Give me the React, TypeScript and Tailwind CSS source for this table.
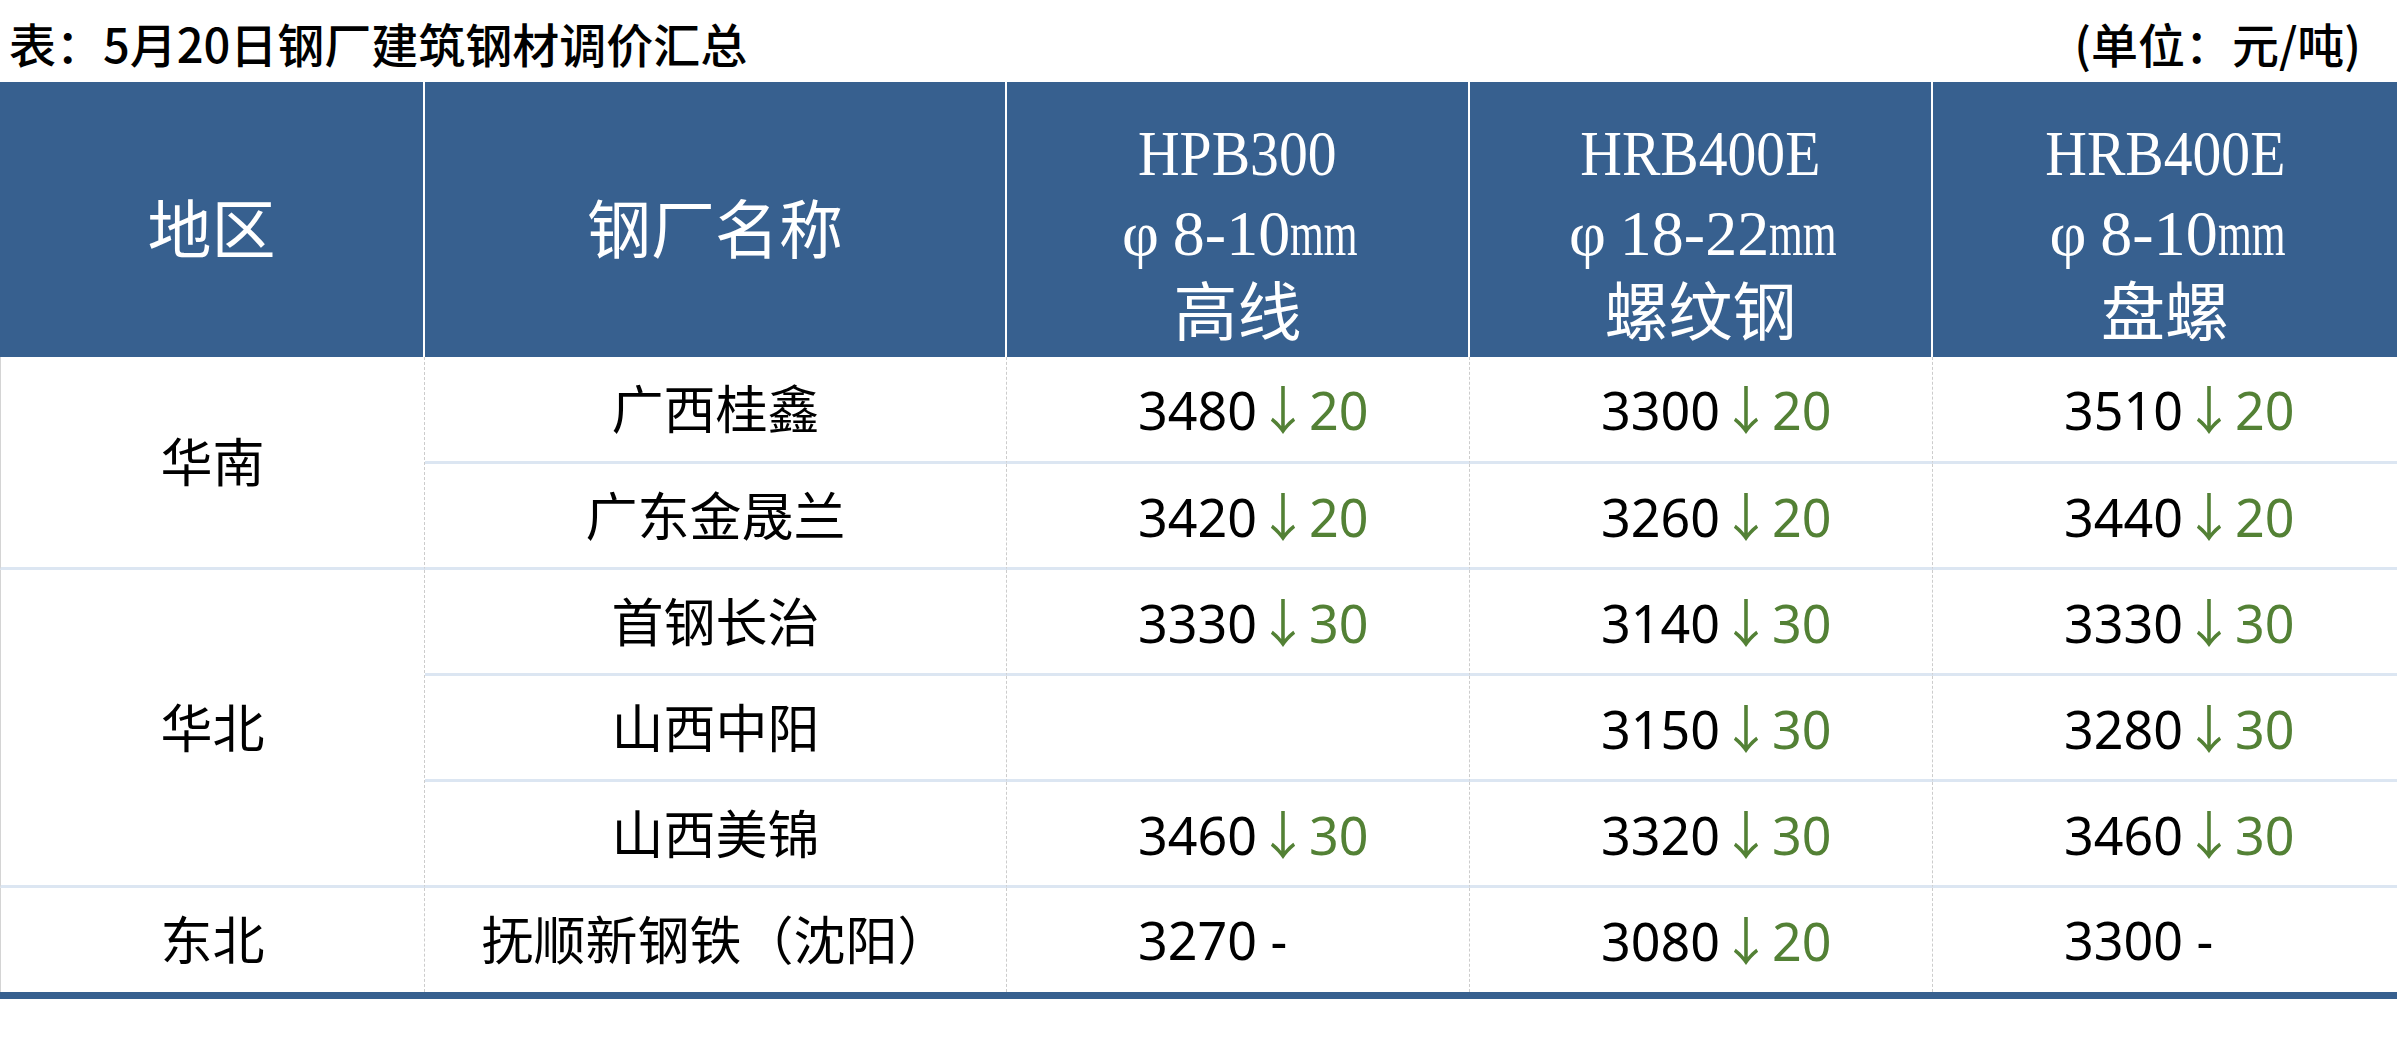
import React from "react";

type Val = { p: string; d?: string } | null;
type Item = { name: string; v: [Val, Val, Val] };
type Group = { region: string; items: Item[] };

const groups: Group[] = [
  {
    region: "华南",
    items: [
      { name: "广西桂鑫", v: [{ p: "3480", d: "20" }, { p: "3300", d: "20" }, { p: "3510", d: "20" }] },
      { name: "广东金晟兰", v: [{ p: "3420", d: "20" }, { p: "3260", d: "20" }, { p: "3440", d: "20" }] },
    ],
  },
  {
    region: "华北",
    items: [
      { name: "首钢长治", v: [{ p: "3330", d: "30" }, { p: "3140", d: "30" }, { p: "3330", d: "30" }] },
      { name: "山西中阳", v: [null, { p: "3150", d: "30" }, { p: "3280", d: "30" }] },
      { name: "山西美锦", v: [{ p: "3460", d: "30" }, { p: "3320", d: "30" }, { p: "3460", d: "30" }] },
    ],
  },
  {
    region: "东北",
    items: [{ name: "抚顺新钢铁（沈阳）", v: [{ p: "3270" }, { p: "3080", d: "20" }, { p: "3300" }] }],
  },
];

const spanCls: Record<number, string> = { 1: "row-span-1", 2: "row-span-2", 3: "row-span-3" };

function Mm() {
  return <span className="inline-block w-[63px] origin-left scale-x-[0.68] whitespace-nowrap">mm</span>;
}

function ColHead({ a, b, c }: { a: string; b: string; c: string }) {
  return (
    <div className="flex h-full flex-col items-center justify-center pt-[27px] text-white">
      <div className="scale-x-[0.9] leading-[88px] font-['Liberation_Serif','Noto_Sans_CJK_SC',serif] text-[64px]">{a}</div>
      <div className="leading-[72px] font-['Liberation_Serif','Noto_Sans_CJK_SC',serif] text-[64px] whitespace-nowrap">
        <span className="mr-[14px]">φ</span>
        {b}
        <Mm />
      </div>
      <div className="leading-[87px] font-['Liberation_Serif','Noto_Sans_CJK_SC',serif] text-[64px]">{c}</div>
    </div>
  );
}

export default function App() {
  const totalRows = groups.reduce((s, g) => s + g.items.length, 0);
  let idx = 0;
  const cells: React.ReactNode[] = [];
  groups.forEach((g, gi) => {
    const lastGroup = gi === groups.length - 1;
    cells.push(
      <div
        key={"r" + gi}
        className={
          spanCls[g.items.length] +
          " flex items-center justify-center border-l border-l-[#d4d4d4] border-r border-r-[#cccccc] [border-right-style:dashed] " +
          (lastGroup ? "" : "border-b-[3px] border-b-[#dce6f2]")
        }
      >
        {g.region}
      </div>
    );
    g.items.forEach((it, ii) => {
      idx++;
      const last = idx === totalRows;
      const bb = last ? "" : " border-b-[3px] border-b-[#dce6f2] [border-bottom-style:solid]";
      cells.push(
        <div
          key={"n" + gi + ii}
          className={"flex items-center justify-center whitespace-nowrap border-r border-r-[#cccccc] [border-right-style:dashed]" + bb}
        >
          {it.name}
        </div>
      );
      it.v.forEach((v, vi) => {
        cells.push(
          <div
            key={"v" + gi + ii + vi}
            className={
              "flex items-center pl-[131px] whitespace-nowrap " +
              (vi < 2 ? "border-r border-r-[#cccccc] [border-right-style:dashed]" : "") +
              bb
            }
          >
            {v && (
              <span className="whitespace-pre">
                <span className="text-black">{v.p}</span>
                {v.d ? (
                  <span className="text-[#538135]">
                    <span className="font-['Noto_Sans_CJK_SC',sans-serif]">↓</span>
                    {v.d}
                  </span>
                ) : (
                  <span className="text-black">{" -"}</span>
                )}
              </span>
            )}
          </div>
        );
      });
    });
  });

  return (
    <div className="w-[2397px] h-[1056px] bg-white overflow-hidden font-['Noto_Sans','Noto_Sans_CJK_SC',sans-serif] text-black">
      <div className="h-[82px] flex items-center justify-between pl-[9px] pr-[36px] pt-[4px] font-['Noto_Sans_CJK_SC',sans-serif] text-[47px] font-medium">
        <span>表：5月20日钢厂建筑钢材调价汇总</span>
        <span>(单位：元/吨)</span>
      </div>
      <div className="grid grid-cols-[425px_582px_463px_463px_464px] grid-rows-[275px_107px_106px_106px_106px_106px_104px] text-[52px]">
        <div className="bg-[#37608f] border-r-2 border-r-white flex items-center justify-center pt-[10px] text-white font-['Noto_Sans_CJK_SC',sans-serif] text-[64px]">
          地区
        </div>
        <div className="bg-[#37608f] border-r-2 border-r-white flex items-center justify-center pt-[10px] text-white font-['Noto_Sans_CJK_SC',sans-serif] text-[64px]">
          钢厂名称
        </div>
        <div className="bg-[#37608f] border-r-2 border-r-white">
          <ColHead a="HPB300" b="8-10" c="高线" />
        </div>
        <div className="bg-[#37608f] border-r-2 border-r-white">
          <ColHead a="HRB400E" b="18-22" c="螺纹钢" />
        </div>
        <div className="bg-[#37608f]">
          <ColHead a="HRB400E" b="8-10" c="盘螺" />
        </div>
        {cells}
      </div>
      <div className="h-[7px] bg-[#37608f]" />
    </div>
  );
}
